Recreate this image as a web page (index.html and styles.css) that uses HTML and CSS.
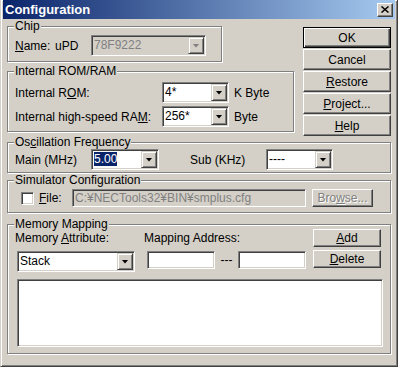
FILE: index.html
```html
<!DOCTYPE html>
<html lang="en">
<head>
    <meta charset="UTF-8">
    <title>Configuration</title>
    <link rel="stylesheet" href="styles.css">
</head>
<body>
    <div class="window">
        <div class="titlebar">
            <span class="title">Configuration</span>
            <span class="close-btn">
                <svg width="8" height="7" viewBox="0 0 8 7"><path d="M0.5 0.5l7 6M7.5 0.5l-7 6" stroke="#000" stroke-width="1.5"/></svg>
            </span>
        </div>

        <div class="content">
            <div class="top">
                <div class="left-col">
                    <div class="group chip">
                        <div class="group-title">Chip</div>
                        <div class="row chip-row">
                            <span class="lbl w-name"><u>N</u>ame:</span>
                            <span class="lbl w-upd">uPD</span>
                            <div class="combo disabled w-chip">
                                <span class="combo-text">78F9222</span>
                                <span class="combo-btn"><i class="arrow"></i></span>
                            </div>
                        </div>
                    </div>

                    <div class="group rom">
                        <div class="group-title">Internal ROM/RAM</div>
                        <div class="row rom-row first">
                            <span class="lbl w-rom-lbl">Internal R<u>O</u>M:</span>
                            <div class="combo w-rom">
                                <span class="combo-text">4*</span>
                                <span class="combo-btn"><i class="arrow"></i></span>
                            </div>
                            <span class="unit">K Byte</span>
                        </div>
                        <div class="row rom-row">
                            <span class="lbl w-rom-lbl">Internal high-speed RA<u>M</u>:</span>
                            <div class="combo w-rom">
                                <span class="combo-text">256*</span>
                                <span class="combo-btn"><i class="arrow"></i></span>
                            </div>
                            <span class="unit">Byte</span>
                        </div>
                    </div>
                </div>

                <div class="buttons">
                    <button class="btn default">OK</button>
                    <button class="btn">Cancel</button>
                    <button class="btn"><u>R</u>estore</button>
                    <button class="btn"><u>P</u>roject...</button>
                    <button class="btn"><u>H</u>elp</button>
                </div>
            </div>

            <div class="group osc">
                <div class="group-title">Os<u>c</u>illation Frequency</div>
                <div class="row osc-row">
                    <span class="lbl w-osc-lbl">Main (MHz)</span>
                    <div class="combo w-main">
                        <span class="combo-text"><span class="selected">5.00</span></span>
                        <span class="combo-btn"><i class="arrow"></i></span>
                    </div>
                    <span class="lbl w-osc-lbl sub-lbl">Sub (KHz)</span>
                    <div class="combo w-sub">
                        <span class="combo-text">----</span>
                        <span class="combo-btn"><i class="arrow"></i></span>
                    </div>
                </div>
            </div>

            <div class="group sim">
                <div class="group-title">Simulator Configuration</div>
                <div class="row sim-row">
                    <span class="checkbox"></span>
                    <span class="lbl w-file"><u>F</u>ile:</span>
                    <div class="textbox disabled w-path">C:¥NECTools32¥BIN¥smplus.cfg</div>
                    <button class="btn disabled w-browse">Bro<u>w</u>se...</button>
                </div>
            </div>

            <div class="group mem">
                <div class="group-title">Memory Mapping</div>
                <div class="row mem-row1">
                    <span class="lbl w-attr">Memory <u>A</u>ttribute:</span>
                    <span class="lbl w-addr">Mappin<u>g</u> Address:</span>
                    <button class="btn w-add"><u>A</u>dd</button>
                </div>
                <div class="row mem-row2">
                    <div class="combo w-stack">
                        <span class="combo-text">Stack</span>
                        <span class="combo-btn"><i class="arrow"></i></span>
                    </div>
                    <div class="textbox w-addr-in first-in"></div>
                    <span class="dash">---</span>
                    <div class="textbox w-addr-in"></div>
                    <button class="btn w-delete"><u>D</u>elete</button>
                </div>
                <div class="listbox"></div>
            </div>
        </div>
    </div>
</body>
</html>
```

FILE: styles.css
```css
* {
    box-sizing: border-box;
}

body {
    margin: 0;
    background-color: #d4d0c8;
    font-family: "Liberation Sans", Arial, sans-serif;
    font-size: 12px;
    color: #000;
}

u {
    text-decoration: underline;
}

.window {
    width: 398px;
    height: 367px;
    border: 1px solid;
    border-top-width: 0;
    border-color: #d4d0c8 #404040 #404040 #d4d0c8;
    box-shadow: inset 1px 1px #fff, inset -1px -1px #808080;
    padding: 0 2px 2px;
    background-color: #d4d0c8;
}

/* title bar */
.titlebar {
    height: 19px;
    display: flex;
    align-items: center;
    justify-content: space-between;
    padding: 0 2px;
    background: linear-gradient(to right, #0a246a, #a6caf0);
    color: #fff;
}

.title {
    font-weight: bold;
    font-size: 13px;
}

.close-btn {
    width: 16px;
    height: 14px;
    display: flex;
    align-items: center;
    justify-content: center;
    background-color: #d4d0c8;
    border: 1px solid;
    border-color: #fff #404040 #404040 #fff;
    box-shadow: inset -1px -1px #808080;
}

.close-btn svg {
    display: block;
}

.content {
    padding: 7px 4px 0;
}

.top {
    display: flex;
    gap: 9px;
}

.left-col {
    width: 287px;
}

.buttons {
    display: flex;
    flex-direction: column;
    gap: 1px;
    width: 88px;
    padding-top: 1px;
}

/* group boxes */
.group {
    border: 1px solid #808080;
    box-shadow: inset 1px 1px #fff, 1px 1px #fff;
    padding: 0 6px;
}

.group-title {
    display: table;
    margin-top: -7px;
    padding: 0 1px;
    line-height: 12px;
    background-color: #d4d0c8;
}

.row {
    display: flex;
    align-items: center;
    padding-left: 1px;
}

.lbl {
    white-space: nowrap;
}

.chip {
    width: 215px;
    padding-bottom: 5px;
}

.chip-row {
    margin-top: 3px;
}

.w-name {
    width: 40px;
}

.w-upd {
    width: 36px;
}

.rom {
    margin-top: 9px;
    padding-bottom: 4px;
}

.rom-row {
    margin-top: 3px;
}

.rom-row.first {
    margin-top: 5px;
}

.w-rom-lbl {
    width: 147px;
}

.unit {
    margin-left: 5px;
}

.osc {
    margin-top: 6px;
    padding-bottom: 2px;
}

.osc-row {
    margin-top: 1px;
}

.w-osc-lbl {
    width: 76px;
}

.sub-lbl {
    margin-left: 31px;
}

.sim {
    margin-top: 7px;
    padding-bottom: 5px;
}

.sim-row {
    margin-top: 3px;
}

.w-file {
    width: 33px;
    margin-left: 5px;
}

.mem {
    margin-top: 11px;
    padding-bottom: 6px;
}

.mem-row1 {
    margin-top: -1px;
}

.w-attr {
    width: 129px;
}

.w-addr {
    width: 169px;
}

.mem-row2 {
    margin-top: 3px;
    align-items: flex-start;
}

.dash {
    width: 23px;
    text-align: center;
    line-height: 20px;
}

/* combo boxes */
.combo {
    display: flex;
    height: 21px;
    padding: 1px;
    background-color: #fff;
    border: 1px solid;
    border-color: #808080 #fff #fff #808080;
    box-shadow: inset 1px 1px #404040, inset -1px -1px #d4d0c8;
}

.combo-text {
    flex: 1;
    padding-left: 1px;
    line-height: 17px;
    white-space: nowrap;
    overflow: hidden;
}

.combo-btn {
    width: 16px;
    display: flex;
    align-items: center;
    justify-content: center;
    background-color: #d4d0c8;
    border: 1px solid;
    border-color: #d4d0c8 #404040 #404040 #d4d0c8;
    box-shadow: inset 1px 1px #fff, inset -1px -1px #808080;
}

.arrow {
    display: block;
    width: 7px;
    height: 4px;
    background-color: #000;
    clip-path: polygon(0 0, 100% 0, 50% 100%);
}

.combo.disabled {
    background-color: #d4d0c8;
    color: #808080;
}

.combo.disabled .arrow {
    background-color: #808080;
}

.selected {
    background-color: #0a246a;
    color: #fff;
}

.w-chip {
    width: 115px;
}

.w-rom {
    width: 67px;
}

.w-main {
    width: 68px;
}

.w-sub {
    width: 67px;
}

.w-stack {
    width: 118px;
    margin-left: 2px;
    margin-top: 1px;
}

/* text boxes */
.textbox {
    height: 18px;
    padding: 0 2px;
    line-height: 16px;
    background-color: #fff;
    border: 1px solid;
    border-color: #808080 #fff #fff #808080;
    box-shadow: inset 1px 1px #404040, inset -1px -1px #d4d0c8;
    white-space: nowrap;
    overflow: hidden;
}

.textbox.disabled {
    background-color: #d4d0c8;
    color: #808080;
}

.w-path {
    width: 234px;
}

.w-addr-in {
    width: 68px;
    margin-top: 1px;
}

.first-in {
    margin-left: 12px;
}

.checkbox {
    width: 13px;
    height: 13px;
    margin-left: 6px;
    background-color: #fff;
    border: 1px solid;
    border-color: #808080 #fff #fff #808080;
    box-shadow: inset 1px 1px #404040, inset -1px -1px #d4d0c8;
}

.listbox {
    width: 366px;
    height: 68px;
    margin: 7px 0 0 3px;
    background-color: #fff;
    border: 1px solid;
    border-color: #808080 #fff #fff #808080;
    box-shadow: inset 1px 1px #404040, inset -1px -1px #d4d0c8;
}

/* push buttons */
.btn {
    font: inherit;
    color: #000;
    height: 21px;
    padding: 0;
    background-color: #d4d0c8;
    border: 1px solid;
    border-color: #fff #404040 #404040 #fff;
    box-shadow: inset -1px -1px #808080;
}

.btn.default {
    border-color: #000;
    box-shadow: inset 1px 1px #fff, inset -1px -1px #404040, inset -2px -2px #808080;
}

.btn.disabled {
    color: #808080;
    text-shadow: 1px 1px #fff;
}

.w-browse {
    width: 61px;
    height: 18px;
    margin-left: 6px;
}

.w-add {
    width: 68px;
    height: 18px;
}

.w-delete {
    width: 68px;
    height: 18px;
    margin-left: 7px;
}
```
